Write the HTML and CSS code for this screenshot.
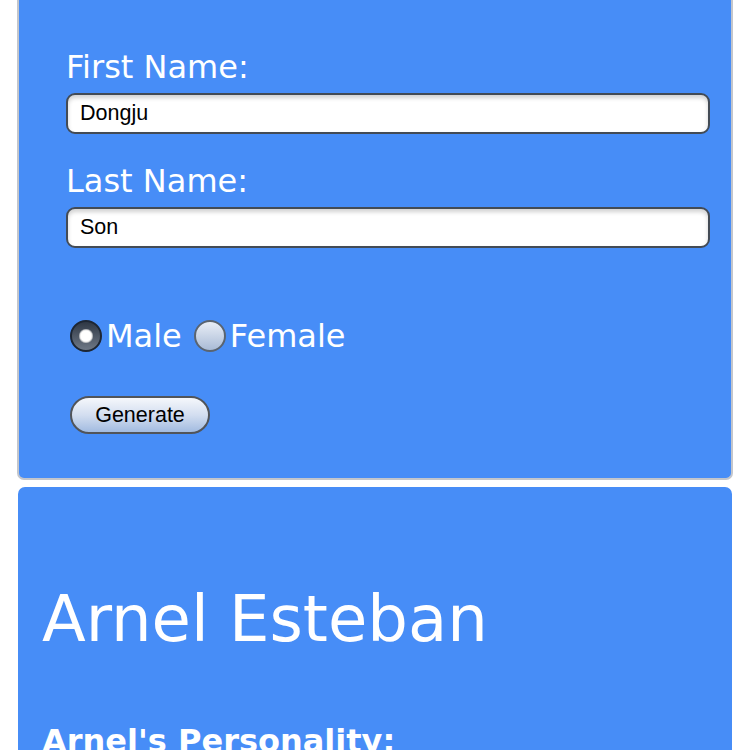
FILE: index.html
```html
<!DOCTYPE html>
<html>
<head>
<meta charset="utf-8">
<link rel="stylesheet" href="styles.css">
</head>
<body>
<div class="page">
  <section class="card form-card">
    <label class="field-label" for="first">First Name:</label>
    <input class="text-input" id="first" type="text" value="Dongju">
    <label class="field-label second" for="last">Last Name:</label>
    <input class="text-input" id="last" type="text" value="Son">
    <div class="gender">
      <input class="radio" type="radio" name="g" id="male" checked>
      <label class="radio-label" for="male">Male</label>
      <input class="radio" type="radio" name="g" id="female">
      <label class="radio-label" for="female">Female</label>
    </div>
    <div class="actions">
      <button class="generate" type="button">Generate</button>
    </div>
  </section>
  <section class="card result-card">
    <h1 class="name">Arnel Esteban</h1>
    <h3 class="subhead">Arnel's Personality:</h3>
  </section>
</div>
</body>
</html>
```

FILE: styles.css
```css
html, body {
  margin: 0;
  padding: 0;
  background: #ffffff;
  height: 750px;
  overflow: hidden;
}

.page {
  padding: 0 17px;
  display: flex;
  flex-direction: column;
  gap: 7px;
  font-family: "DejaVu Sans", Verdana, sans-serif;
  color: #ffffff;
}

.card {
  background: #478df7;
  border-radius: 0 0 7px 7px;
}

.form-card {
  border: 2px solid #c3c6cc;
  border-top: none;
  padding: 49px 21px 44px 46px;
  display: flex;
  flex-direction: column;
  align-items: flex-start;
}

.field-label {
  font-size: 32px;
  line-height: 37px;
  margin: 0 0 7px 1px;
}

.field-label.second {
  margin-top: 29px;
}

.text-input {
  box-sizing: border-box;
  width: 644px;
  height: 41px;
  margin: 0 0 0 1px;
  border: 2px solid #434b55;
  border-radius: 9px;
  background: #ffffff;
  box-shadow: inset 0 3px 4px rgba(0, 0, 0, 0.18);
  padding: 0 12px;
  font-family: "Liberation Sans", Arial, sans-serif;
  font-size: 21.5px;
  color: #000000;
  outline: none;
}

.gender {
  display: flex;
  align-items: center;
  margin-top: 72px;
  height: 32px;
}

.radio {
  appearance: none;
  -webkit-appearance: none;
  box-sizing: border-box;
  width: 32px;
  height: 32px;
  margin: 0 4px 0 5px;
  border-radius: 50%;
  border: 2px solid #5a6470;
  background: linear-gradient(#e9eef6, #a9bbd6);
}

.radio:checked {
  border-color: #1d2633;
  background:
    radial-gradient(circle at 50% 50%, #ffffff 0 5px, #e2e2e2 6px, transparent 7.5px),
    linear-gradient(#2f3845, #6e7886);
}

.radio-label {
  font-size: 32px;
  line-height: 37px;
  margin-right: 7px;
}

.actions {
  margin-top: 44px;
  margin-left: 5px;
}

.generate {
  box-sizing: border-box;
  width: 140px;
  height: 38px;
  border: 2px solid #515459;
  border-radius: 19px;
  background: linear-gradient(#f5f7fb 0%, #d3def0 50%, #a2bbe0 100%);
  font-family: "Liberation Sans", Arial, sans-serif;
  font-size: 21.5px;
  color: #000000;
  padding: 0;
}

.result-card {
  margin: 0 1px;
  border-radius: 7px 7px 0 0;
  padding: 95px 24px 0 24px;
  height: 400px;
}

.name {
  margin: 0;
  font-size: 64px;
  font-weight: normal;
  line-height: 74px;
}

.subhead {
  margin: 67px 0 0 0;
  font-size: 32px;
  font-weight: bold;
  line-height: 37px;
}
```
